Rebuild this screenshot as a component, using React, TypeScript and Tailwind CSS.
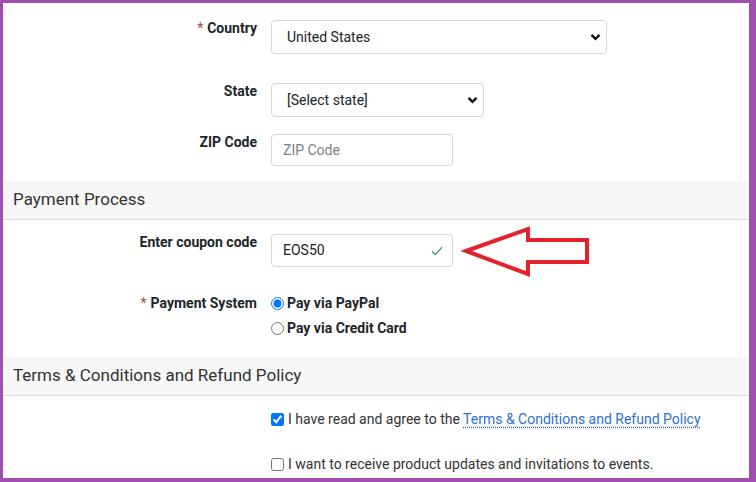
import React from "react";

const font = { fontFamily: "Roboto, 'Liberation Sans', sans-serif" };

function Chevron() {
  return (
    <svg width="11" height="8" viewBox="0 0 11 8" className="pointer-events-none absolute right-[6px] top-1/2 -translate-y-1/2">
      <path d="M1.5 1.8 L5.5 5.8 L9.5 1.8" fill="none" stroke="#111" strokeWidth="2.4" />
    </svg>
  );
}

function Label({ text, required }: { text: string; required?: boolean }) {
  return (
    <div className="w-[254px] shrink-0 text-right text-[14px] leading-[20px] font-bold text-[#212529]">
      {required && <span className="text-[#a94442] font-normal mr-1">*</span>}
      {text}
    </div>
  );
}

function SectionHeader({ title }: { title: string }) {
  return (
    <div className="h-[39px] bg-[#f7f7f7] border-b border-[#dcdcdc] flex items-center px-[10px] text-[17px] text-[#333]">
      {title}
    </div>
  );
}

export default function App() {
  return (
    <div
      style={font}
      className="w-[756px] h-[482px] box-border overflow-hidden bg-white border-[#a04fae] border-l-[3px] border-t-[3px] border-r-[7px] border-b-[4px]"
    >
      {/* Country */}
      <div className="flex gap-[14px] mt-[15px]">
        <Label text="Country" required />
        <div className="relative mt-[2px] w-[336px]">
          <div className="h-[34px] border border-[#d3d7db] rounded-[4px] flex items-center pl-[15px] text-[14px] text-[#212529]">
            United States
          </div>
          <Chevron />
        </div>
      </div>

      {/* State */}
      <div className="flex gap-[14px] mt-[27px]">
        <Label text="State" />
        <div className="relative mt-[2px] w-[213px]">
          <div className="h-[34px] border border-[#d3d7db] rounded-[4px] flex items-center pl-[15px] text-[14px] text-[#212529]">
            [Select state]
          </div>
          <Chevron />
        </div>
      </div>

      {/* ZIP */}
      <div className="flex gap-[14px] mt-[15px]">
        <Label text="ZIP Code" />
        <div className="mt-[2px] w-[182px] h-[32px] border border-[#d3d7db] rounded-[4px] flex items-center pl-[11px] text-[14px] text-[#7b8288]">
          ZIP Code
        </div>
      </div>

      <div className="mt-[15px]">
        <SectionHeader title="Payment Process" />
      </div>

      {/* Coupon */}
      <div className="flex gap-[14px] mt-[12px]">
        <Label text="Enter coupon code" />
        <div className="relative mt-[2px] w-[182px] h-[33px] border border-[#d3d7db] rounded-[4px] flex items-center justify-between pl-[11px] pr-[9px] text-[14px] text-[#212529]">
          EOS50
          <svg width="12" height="10" viewBox="0 0 12 10">
            <path d="M1 5.2 L4.3 8.4 L11 1.3" fill="none" stroke="#4f9a78" strokeWidth="1.4" />
          </svg>
          {/* annotation arrow */}
          <svg width="140" height="56" viewBox="0 0 140 56" className="absolute left-[189px] top-[-10px]">
            <polygon
              points="5,26 67,4 67,15 126,15 126,37 67,37 67,49"
              fill="white"
              stroke="#e4222b"
              strokeWidth="4"
              strokeLinejoin="miter"
            />
          </svg>
        </div>
      </div>

      {/* Payment System */}
      <div className="flex gap-[14px] mt-[26px]">
        <Label text="Payment System" required />
        <div className="flex flex-col gap-[5px] text-[14px] leading-[20px] font-bold text-[#212529]">
          <label className="flex items-center gap-[3px]">
            <input type="radio" name="pay" defaultChecked className="m-0 w-[13px] h-[13px] accent-[#0075ff]" />
            Pay via PayPal
          </label>
          <label className="flex items-center gap-[3px]">
            <input type="radio" name="pay" className="m-0 w-[13px] h-[13px]" />
            Pay via Credit Card
          </label>
        </div>
      </div>

      <div className="mt-[19px]">
        <SectionHeader title="Terms & Conditions and Refund Policy" />
      </div>

      <div className="ml-[268px] mt-[13px] flex flex-col gap-[25px] text-[14px] leading-[20px] text-[#333]">
        <label className="flex items-center gap-[4px]">
          <input type="checkbox" defaultChecked className="m-0 w-[13px] h-[13px] accent-[#0075ff]" />
          <span>
            I have read and agree to the{" "}
            <a className="text-[#2f6fd0] underline decoration-dotted underline-offset-[3px]">
              Terms &amp; Conditions and Refund Policy
            </a>
          </span>
        </label>
        <label className="flex items-center gap-[4px]">
          <input type="checkbox" className="m-0 w-[13px] h-[13px]" />
          I want to receive product updates and invitations to events.
        </label>
      </div>
    </div>
  );
}
